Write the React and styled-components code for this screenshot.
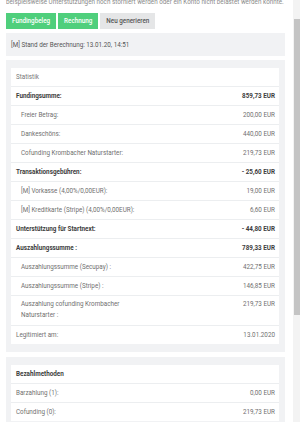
import React from 'react';
import styled, { createGlobalStyle } from 'styled-components';

// --- STYLES ---
const GlobalStyle = createGlobalStyle`
  html, body {
    margin: 0;
    padding: 0;
    background: #ffffff;
    overflow: hidden;
  }
  body {
    font-family: Roboto, 'Liberation Sans', sans-serif;
  }
`;

const Page = styled.div`
  width: 279px;
  margin-left: 6px;
  height: 422px;
  overflow: hidden;
`;

const Intro = styled.p`
  margin: -3px 0 0 0;
  font-size: 6.3px;
  line-height: 10px;
  color: #8a8a8a;
  white-space: nowrap;
`;

const ButtonRow = styled.div`
  display: flex;
  gap: 2px;
  margin-top: 6px;
`;

const Button = styled.button`
  height: 16px;
  padding: 0 6px;
  border: none;
  border-radius: 0;
  font-family: inherit;
  font-size: 6.3px;
  font-weight: 500;
  background: ${p => (p.$green ? '#4fcf7c' : '#e5e6e7')};
  color: ${p => (p.$green ? '#ffffff' : '#555555')};
  cursor: pointer;
`;

const StandBox = styled.div`
  margin-top: 4px;
  height: 23px;
  padding: 0 5px;
  display: flex;
  align-items: center;
  background: #f1f2f4;
  font-size: 6.3px;
  color: #555;
`;

const Panel = styled.section`
  margin-top: ${p => p.$top || 4}px;
  background: #f1f2f4;
  padding: 8px 6px 8px 5px;
`;

const Card = styled.div`
  background: #ffffff;
`;

const Row = styled.div`
  display: flex;
  justify-content: space-between;
  align-items: ${p => (p.$multi ? 'flex-start' : 'center')};
  min-height: 18px;
  padding-top: ${p => (p.$multi ? 3 : 0)}px;
  padding-bottom: ${p => (p.$multi ? 4 : 0)}px;
  padding-left: ${p => (p.$indent ? 10 : 5)}px;
  padding-right: 4px;
  border-bottom: 1px solid #eceef0;
  font-size: 6.3px;
  line-height: 11px;
  color: ${p => (p.$bold ? '#3d3d3d' : '#707070')};
  font-weight: ${p => (p.$bold ? 700 : 400)};
  &:last-child {
    border-bottom: none;
  }
`;

const Label = styled.span`
  max-width: ${p => (p.$wrap ? '120px' : 'none')};
`;

const Value = styled.span`
  white-space: nowrap;
`;

const Header = styled(Row)`
  color: ${p => (p.$bold ? '#3d3d3d' : '#777')};
`;

const ScrollTrack = styled.div`
  position: fixed;
  top: 0;
  right: 0;
  width: 7px;
  height: 100%;
  background: #f3f3f3;
`;

const ScrollThumb = styled.div`
  position: absolute;
  top: 19px;
  left: 1px;
  right: 0;
  height: 296px;
  background: #c4c4c4;
`;

const stats = [
  { label: 'Fundingsumme:', value: '859,73 EUR', bold: true },
  { label: 'Freier Betrag:', value: '200,00 EUR', indent: true },
  { label: 'Dankeschöns:', value: '440,00 EUR', indent: true },
  { label: 'Cofunding Krombacher Naturstarter:', value: '219,73 EUR', indent: true },
  { label: 'Transaktionsgebühren:', value: '- 25,60 EUR', bold: true },
  { label: '[M] Vorkasse (4,00%/0,00EUR):', value: '19,00 EUR', indent: true },
  { label: '[M] Kreditkarte (Stripe) (4,00%/0,00EUR):', value: '6,60 EUR', indent: true },
  { label: 'Unterstützung für Startnext:', value: '- 44,80 EUR', bold: true },
  { label: 'Auszahlungssumme :', value: '789,33 EUR', bold: true },
  { label: 'Auszahlungssumme (Secupay) :', value: '422,75 EUR', indent: true },
  { label: 'Auszahlungssumme (Stripe) :', value: '146,85 EUR', indent: true },
  { label: 'Auszahlung cofunding Krombacher Naturstarter :', value: '219,73 EUR', indent: true, multi: true },
  { label: 'Legitimiert am:', value: '13.01.2020' },
];

const payments = [
  { label: 'Barzahlung (1):', value: '0,00 EUR' },
  { label: 'Cofunding (0):', value: '219,73 EUR' },
];

// --- LOGIC ---
function App() {
  return (
    <>
      <GlobalStyle />
      <Page>
        <Intro>
          beispielsweise Unterstützungen noch storniert werden oder ein Konto nicht belastet werden konnte.
        </Intro>
        <ButtonRow>
          <Button $green>Fundingbeleg</Button>
          <Button $green>Rechnung</Button>
          <Button>Neu generieren</Button>
        </ButtonRow>
        <StandBox>[M] Stand der Berechnung: 13.01.20, 14:51</StandBox>

        <Panel $top={4}>
          <Card>
            <Header>Statistik</Header>
            {stats.map((s) => (
              <Row key={s.label} $bold={s.bold} $indent={s.indent} $multi={s.multi}>
                <Label $wrap={s.multi}>{s.label}</Label>
                <Value>{s.value}</Value>
              </Row>
            ))}
          </Card>
        </Panel>

        <Panel $top={5}>
          <Card>
            <Header $bold>Bezahlmethoden</Header>
            {payments.map((s) => (
              <Row key={s.label}>
                <Label>{s.label}</Label>
                <Value>{s.value}</Value>
              </Row>
            ))}
          </Card>
        </Panel>
      </Page>
      <ScrollTrack>
        <ScrollThumb />
      </ScrollTrack>
    </>
  );
}

export default App;
